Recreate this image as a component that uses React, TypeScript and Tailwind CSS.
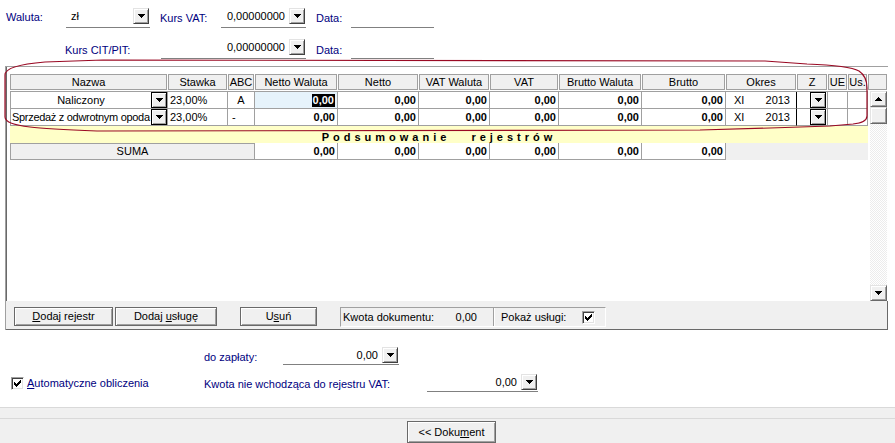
import React from 'react';

type Col = { label: string; cls: string };

const COLS: Col[] = [
  { label: 'Nazwa', cls: 'w-[158px]' },
  { label: 'Stawka', cls: 'w-[60px]' },
  { label: 'ABC', cls: 'w-[27px]' },
  { label: 'Netto Waluta', cls: 'w-[83px]' },
  { label: 'Netto', cls: 'w-[81px]' },
  { label: 'VAT Waluta', cls: 'w-[71px]' },
  { label: 'VAT', cls: 'w-[69px]' },
  { label: 'Brutto Waluta', cls: 'w-[83px]' },
  { label: 'Brutto', cls: 'w-[84px]' },
  { label: 'Okres', cls: 'w-[71px]' },
  { label: 'Z', cls: 'w-[31px]' },
  { label: 'UE', cls: 'w-[20px]' },
  { label: 'Us.', cls: 'w-[20px]' },
];

// money columns, Netto Waluta .. Brutto
const MONEY = ['w-[83px]', 'w-[81px]', 'w-[71px]', 'w-[69px]', 'w-[83px]', 'w-[84px]'];

const cell =
  'h-full shrink-0 border-r border-b border-[#a0a0a0] flex items-center overflow-hidden whitespace-nowrap';

function Arrow({ up }: { up?: boolean }) {
  return (
    <svg width="7" height="4" viewBox="0 0 7 4" shapeRendering="crispEdges" className={up ? 'rotate-180' : ''}>
      <path d="M0 0h7v1H0zM1 1h5v1H1zM2 2h3v1H2zM3 3h1v1H3z" fill="#000" />
    </svg>
  );
}

function ComboBtn() {
  return (
    <div className="w-[16px] h-[16px] shrink-0 flex items-center justify-center bg-[#f0f0f0] border border-t-[#e3e3e3] border-l-[#e3e3e3] border-r-[#404040] border-b-[#404040] shadow-[inset_1px_1px_#fff,inset_-1px_-1px_#a0a0a0]">
      <Arrow />
    </div>
  );
}

function GridBtn() {
  return (
    <div className="w-[16px] h-[16px] shrink-0 flex items-center justify-center bg-[#f0f0f0] border border-black shadow-[inset_1px_1px_#fff,inset_-1px_-1px_#a0a0a0]">
      <Arrow />
    </div>
  );
}

function ScrollBtn({ up }: { up?: boolean }) {
  return (
    <div className="h-[16px] shrink-0 flex items-center justify-center bg-[#f0f0f0] border border-t-[#e3e3e3] border-l-[#e3e3e3] border-r-[#696969] border-b-[#696969] shadow-[inset_1px_1px_#fff,inset_-1px_-1px_#a0a0a0]">
      <Arrow up={up} />
    </div>
  );
}

function Check() {
  return (
    <div className="w-[13px] h-[13px] shrink-0 bg-white border border-t-[#a0a0a0] border-l-[#a0a0a0] border-r-white border-b-white shadow-[inset_1px_1px_#404040,inset_-1px_-1px_#e3e3e3] flex items-center justify-center">
      <svg width="7" height="7" viewBox="0 0 7 7" shapeRendering="crispEdges">
        <path
          d="M6 0h1v1h-1zM5 1h2v1h-2zM0 2h1v1h-1zM4 2h3v1h-3zM0 3h2v1h-2zM3 3h3v1h-3zM0 4h5v1h-5zM1 5h3v1h-3zM2 6h1v1h-1z"
          fill="#000"
        />
      </svg>
    </div>
  );
}

function Label({ className = '', children }: { className?: string; children: React.ReactNode }) {
  return <span className={`shrink-0 text-[#000080] leading-[13px] whitespace-nowrap ${className}`}>{children}</span>;
}

function Field({ className = '', value }: { className?: string; value: string }) {
  return (
    <div className={`shrink-0 border-b border-[#808080] flex items-start justify-end pr-px ${className}`}>
      <span className="leading-[16px] mr-[4px]">{value}</span>
      <ComboBtn />
    </div>
  );
}

function Button({ className = '', children }: { className?: string; children: React.ReactNode }) {
  return (
    <div
      className={`shrink-0 bg-[#f0f0f0] border border-[#696969] shadow-[inset_1px_1px_#fff,inset_-1px_-1px_#a0a0a0] flex items-center justify-center whitespace-nowrap ${className}`}
    >
      {children}
    </div>
  );
}

function TopForm() {
  return (
    <div className="h-[66px] shrink-0 pt-[8px]">
      <div className="flex items-start h-[20px]">
        <Label className="w-[66px] pl-[6px] mt-[3px]">Waluta:</Label>
        <div className="w-[84px] h-[20px] shrink-0 border-b border-[#808080] flex items-start justify-between pr-px">
          <span className="pl-[5px] leading-[16px]">zł</span>
          <ComboBtn />
        </div>
        <Label className="ml-[10px] w-[61px] mt-[4px]">Kurs VAT:</Label>
        <Field className="w-[85px] h-[20px]" value="0,00000000" />
        <Label className="ml-[10px] w-[35px] mt-[4px]">Data:</Label>
        <div className="w-[83px] h-[20px] shrink-0 border-b border-[#808080]" />
      </div>
      <div className="flex items-start h-[20px] mt-[11px]">
        <Label className="ml-[65px] w-[96px] mt-[5px]">Kurs CIT/PIT:</Label>
        <Field className="w-[145px] h-[20px]" value="0,00000000" />
        <Label className="ml-[10px] w-[35px] mt-[5px]">Data:</Label>
        <div className="w-[83px] h-[20px] shrink-0 border-b border-[#808080]" />
      </div>
    </div>
  );
}

function DataRow({ name, centered, abc, selected }: { name: string; centered?: boolean; abc: string; selected?: boolean }) {
  return (
    <div className="flex h-[17px]">
      <div className={`w-[158px] ${cell} border-l`}>
        <span className={`flex-1 min-w-0 overflow-hidden ${centered ? 'text-center' : 'pl-px tracking-[-0.3px]'}`}>{name}</span>
        <GridBtn />
      </div>
      <div className={`w-[60px] ${cell} pl-[2px]`}>23,00%</div>
      <div className={`w-[27px] ${cell} ${abc === 'A' ? 'justify-center' : 'pl-[4px]'}`}>{abc}</div>
      {MONEY.map((w, i) =>
        selected && i === 0 ? (
          <div key={i} className={`${w} ${cell} justify-end pr-[2px] font-bold bg-[#e6f3fb]`}>
            <span className="bg-black text-white px-px leading-[13px]">0,00</span>
          </div>
        ) : (
          <div key={i} className={`${w} ${cell} justify-end pr-[2px] font-bold`}>
            0,00
          </div>
        )
      )}
      <div className={`w-[71px] ${cell} border-r-black justify-between pl-[8px] pr-[6px]`}>
        <span>XI</span>
        <span>2013</span>
      </div>
      <div className={`w-[31px] ${cell} justify-end pr-px`}>
        <GridBtn />
      </div>
      <div className={`w-[20px] ${cell}`} />
      <div className={`w-[20px] ${cell}`} />
    </div>
  );
}

function GridPanel() {
  return (
    <div className="ml-[5px] w-[883px] h-[264px] shrink-0 border-l border-t border-[#a0a0a0] flex flex-col">
      {/* grid */}
      <div className="h-[234px] border-l border-[#696969] pl-[3px] pt-[7px] flex">
        <div className="w-[858px] shrink-0 flex flex-col">
          <div className="flex h-[16px]">
            {COLS.map((c) => (
              <div key={c.label} className={`${c.cls} shrink-0 pr-px`}>
                <div className="h-full border border-[#a0a0a0] bg-[#f0f0f0] flex items-center justify-center overflow-hidden whitespace-nowrap">
                  {c.label}
                </div>
              </div>
            ))}
          </div>
          <div className="mt-px border-t border-[#a0a0a0]">
            <DataRow name="Naliczony" centered abc="A" selected />
            <DataRow name="Sprzedaż z odwrotnym opoda" abc="-" />
          </div>
          <div className="h-[17px] bg-[#ffffc8] flex justify-center overflow-hidden font-bold pt-[5px] leading-[13px] tracking-[4px] [word-spacing:14px] whitespace-pre">
            Podsumowanie rejestrów
          </div>
          <div className="flex h-[17px]">
            <div className="w-[245px] h-full shrink-0 border border-[#a0a0a0] bg-[#f0f0f0] flex items-center justify-center">
              SUMA
            </div>
            {MONEY.map((w, i) => (
              <div key={i} className={`${w} ${cell} justify-end pr-[2px] font-bold`}>
                0,00
              </div>
            ))}
            <div className="flex-1 h-full bg-[#f0f0f0]" />
          </div>
        </div>
        <div className="w-[19px] shrink-0 flex flex-col">
          <div className="h-[16px] border border-[#a0a0a0] bg-[#f0f0f0]" />
          <div className="flex-1 mt-px pl-[2px] flex flex-col">
            <ScrollBtn up />
            <div className="h-[17px] shrink-0 bg-[#f0f0f0] border border-t-[#e3e3e3] border-l-[#e3e3e3] border-r-[#696969] border-b-[#696969] shadow-[inset_1px_1px_#fff,inset_-1px_-1px_#a0a0a0]" />
            <div className="flex-1 bg-[repeating-conic-gradient(#ffffff_0%_25%,#ececec_0%_50%)] bg-[length:2px_2px]" />
            <ScrollBtn />
          </div>
        </div>
      </div>
      {/* button bar */}
      <div className="h-[29px] bg-[#f0f0f0] border-b border-r border-[#696969] flex items-start pt-[6px] pl-[8px]">
        <Button className="w-[99px] h-[19px]">
          <u>D</u>odaj rejestr
        </Button>
        <Button className="ml-[2px] w-[102px] h-[19px]">
          Dodaj&nbsp;<u>u</u>sługę
        </Button>
        <Button className="ml-[23px] w-[77px] h-[19px]">
          U<u>s</u>uń
        </Button>
        <div className="ml-[23px] w-[266px] h-[20px] shrink-0 border border-t-[#a0a0a0] border-l-[#a0a0a0] border-r-white border-b-white flex">
          <div className="w-[153px] shrink-0 h-full border-r border-[#a0a0a0] flex items-center pl-[2px]">
            <span>Kwota dokumentu:</span>
            <span className="ml-auto pr-[16px]">0,00</span>
          </div>
          <div className="flex-1 h-full border-l border-white flex items-center pl-[6px]">
            <span className="w-[81px] shrink-0">Pokaż usługi:</span>
            <Check />
          </div>
        </div>
      </div>
    </div>
  );
}

function BottomForm() {
  return (
    <div className="flex-1 pt-[17px]">
      <div className="flex items-start h-[18px] pl-[204px]">
        <Label className="w-[79px] mt-[4px]">do zapłaty:</Label>
        <Field className="w-[116px] h-[18px]" value="0,00" />
      </div>
      <div className="flex items-start h-[18px] mt-[9px]">
        <div className="w-[204px] shrink-0 pl-[11px] flex items-center mt-[3px]">
          <Check />
          <span className="ml-[3px] text-[#000080] whitespace-nowrap">
            <u>A</u>utomatyczne obliczenia
          </span>
        </div>
        <Label className="w-[223px] mt-[4px]">Kwota nie wchodząca do rejestru VAT:</Label>
        <Field className="w-[111px] h-[18px]" value="0,00" />
      </div>
    </div>
  );
}

export default function App() {
  return (
    <div className="relative w-[895px] h-[443px] overflow-hidden bg-[#f0f0f0] text-[11px] leading-[13px] text-black font-['Liberation_Sans',Arial,sans-serif]">
      <div className="h-[407px] bg-white flex flex-col">
        <TopForm />
        <GridPanel />
        <BottomForm />
      </div>
      <div className="h-[11px] border-t border-[#d9d9d9]" />
      <div className="border-t border-[#d9d9d9] pt-[2px] pl-[407px]">
        <Button className="w-[89px] h-[22px]">
          &lt;&lt; Doku<u>m</u>ent
        </Button>
      </div>

      {/* red hand-drawn annotation round the register rows */}
      <svg className="absolute left-0 top-0 pointer-events-none" width="895" height="443">
        <path
          d="M45 62 L103 60 L765 61 L807 64 C835 65 852 67 859 71 C865 75 867 80 867 88 L867 116 C867 121 862 123 853 124 L830 126 L770 128 L700 130 L97 131 C70 130 45 129 30 127 C12 125 5 122 5 117 L5 75 C5 68 20 64 45 62 Z"
          fill="none"
          stroke="#9a0a24"
          strokeWidth="1.2"
        />
      </svg>
    </div>
  );
}
